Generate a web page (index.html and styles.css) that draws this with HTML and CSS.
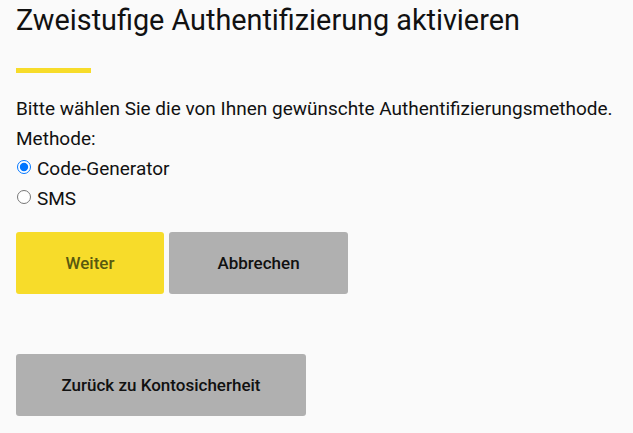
FILE: index.html
```html
<!DOCTYPE html>
<html lang="de">
<head>
    <meta charset="UTF-8">
    <meta name="viewport" content="width=device-width, initial-scale=1.0">
    <title>Zweistufige Authentifizierung aktivieren</title>
    <link rel="stylesheet" href="styles.css">
</head>
<body>
    <div class="page">
        <h1>Zweistufige Authentifizierung aktivieren</h1>
        <div class="divider"></div>

        <form id="tfaForm">
            <p class="intro">Bitte wählen Sie die von Ihnen gewünschte Authentifizierungsmethode.</p>
            <p class="field-label">Methode:</p>
            <label class="option"><input type="radio" name="method" value="app" checked>Code-Generator</label>
            <label class="option"><input type="radio" name="method" value="sms">SMS</label>

            <div class="actions">
                <button type="submit" class="btn btn-primary btn-next">Weiter</button>
                <button type="button" class="btn btn-secondary btn-cancel">Abbrechen</button>
            </div>
        </form>

        <a href="#" class="btn btn-secondary btn-back">Zurück zu Kontosicherheit</a>
    </div>
</body>
</html>
```

FILE: styles.css
```css
body {
    margin: 0;
    background: #fafafa;
    color: #111;
    font-family: Roboto, 'Liberation Sans', sans-serif;
}
.page {
    padding: 0 16px;
}
h1 {
    margin: 0;
    padding-top: 2px;
    font-size: 28.8px;
    font-weight: normal;
    line-height: 36px;
    color: #111;
}
.divider {
    width: 75px;
    height: 5px;
    background: #f7dc2a;
    margin-top: 30px;
    margin-bottom: 21px;
}
form {
    display: flex;
    flex-direction: column;
    align-items: flex-start;
}
.intro, .field-label {
    margin: 0;
    font-size: 19px;
    line-height: 30px;
}
.option {
    display: flex;
    align-items: center;
    font-size: 19px;
    line-height: 30px;
}
.option input {
    margin: 0 6px 4px 1px;
    width: 14px;
    height: 14px;
}
.actions {
    display: flex;
    gap: 5px;
    margin-top: 18px;
}
.btn {
    display: flex;
    align-items: center;
    justify-content: center;
    height: 62px;
    border: none;
    border-radius: 3px;
    font-family: inherit;
    font-size: 17px;
    font-weight: 500;
    text-decoration: none;
    box-sizing: border-box;
    cursor: pointer;
}
.btn-primary {
    background-color: #f7dc2a;
    color: #58590f;
}
.btn-secondary {
    background-color: #b0b0b0;
    color: #111;
}
.btn-next {
    width: 148px;
}
.btn-cancel {
    width: 179px;
}
.btn-back {
    width: 290px;
    height: 62px;
    margin-top: 60px;
}
```
